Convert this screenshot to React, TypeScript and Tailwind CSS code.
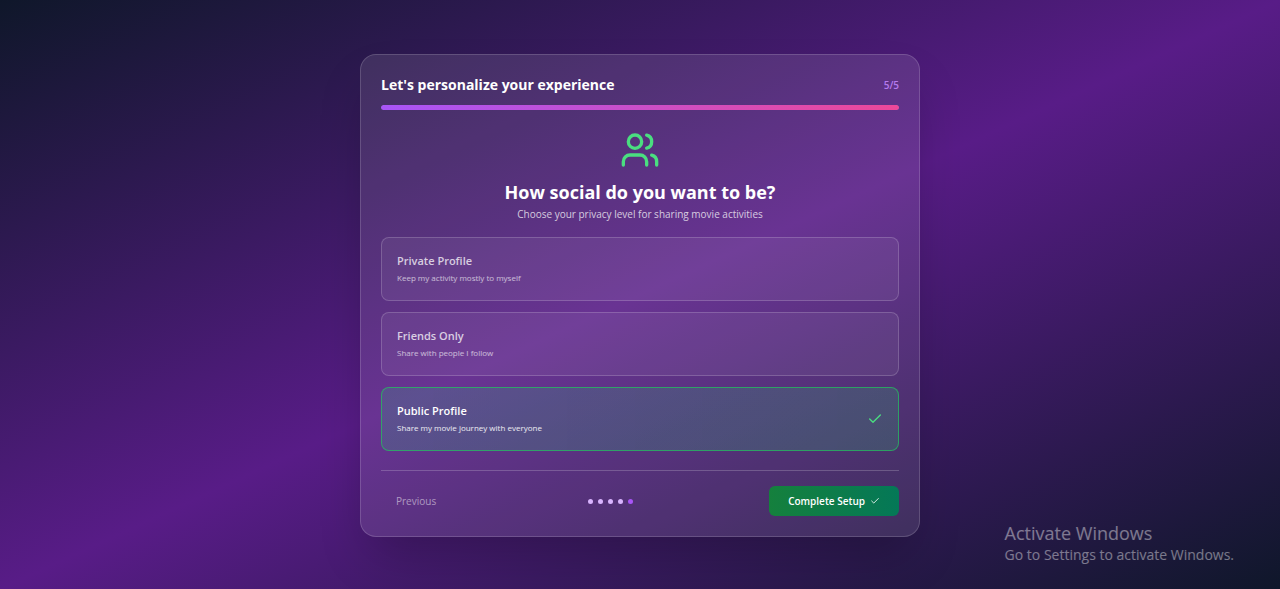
import { useState } from "react";
import { Check, Users } from "lucide-react";

const options = [
  { id: "private", title: "Private Profile", text: "Keep my activity mostly to myself" },
  { id: "friends", title: "Friends Only", text: "Share with people I follow" },
  { id: "public", title: "Public Profile", text: "Share my movie journey with everyone" },
];

const steps = [1, 2, 3, 4, 5];
const current = 5;

export default function App() {
  const [privacy, setPrivacy] = useState("public");

  return (
    <div className="relative flex min-h-screen items-center justify-center overflow-hidden bg-linear-to-br/srgb from-[#0f172a] via-[#581c87] to-[#0f172a] pt-0.5 font-['Open_Sans','Noto_Sans',sans-serif] text-white">
      <main className="w-full max-w-[560px] rounded-2xl border border-white/16 bg-white/10 p-5 shadow-2xl">
        <header>
          <div className="flex items-center justify-between">
            <h1 className="text-sm leading-5 font-bold">Let's personalize your experience</h1>
            <span className="text-[10px] leading-5 font-semibold text-[#b57bee]">
              {current}/{steps.length}
            </span>
          </div>
          <div className="mt-2.5 h-[5px] overflow-hidden rounded-full bg-white/20">
            <div
              className="h-full rounded-full bg-linear-to-r/srgb from-[#a855f7] to-[#ec4899]"
              style={{ width: `${(current / steps.length) * 100}%` }}
            />
          </div>
        </header>

        <section className="mt-5">
          <div className="text-center">
            <Users className="mx-auto size-10 text-[#4ade80]" aria-hidden="true" />
            <h2 className="mt-2.5 text-lg leading-6 font-bold">How social do you want to be?</h2>
            <p className="text-[10px] leading-5 text-white/75">
              Choose your privacy level for sharing movie activities
            </p>
          </div>

          <div className="mt-[13px] flex flex-col gap-[11px]">
            {options.map((option) => {
              const selected = option.id === privacy;
              return (
                <button
                  key={option.id}
                  type="button"
                  aria-pressed={selected}
                  onClick={() => setPrivacy(option.id)}
                  className={
                    selected
                      ? "flex h-16 items-center justify-between rounded-lg border border-[#22c55e]/70 bg-linear-to-r/srgb from-[#3aa88a]/25 to-[#3a9a74]/28 px-[15px] text-left text-white"
                      : "flex h-16 items-center justify-between rounded-lg border border-white/18 bg-white/6 px-[15px] text-left text-white/75"
                  }
                >
                  <span>
                    <span className="block text-[11px] leading-[18px] font-semibold">{option.title}</span>
                    <span
                      className={
                        selected
                          ? "block text-[8px] leading-4 text-white/90"
                          : "block text-[8px] leading-4 text-white/65"
                      }
                    >
                      {option.text}
                    </span>
                  </span>
                  {selected && <Check className="size-4 text-[#4ade80]" aria-hidden="true" />}
                </button>
              );
            })}
          </div>
        </section>

        <footer className="mt-[19px] flex items-center justify-between border-t border-white/20 pt-[15px]">
          <button type="button" className="px-[15px] text-[10px] leading-5 text-white/50">
            Previous
          </button>
          <div className="flex gap-[5px]">
            {steps.map((step) => (
              <span
                key={step}
                className={
                  step === current
                    ? "size-[5px] rounded-full bg-[#a855f7]"
                    : "size-[5px] rounded-full bg-[#d8b4fe]"
                }
              />
            ))}
          </div>
          <button
            type="button"
            className="flex h-[30px] items-center gap-[5px] rounded-md bg-linear-to-r/srgb from-[#15803d] to-[#047857] px-[19px] text-[10px] font-semibold"
          >
            Complete Setup
            <Check className="size-2.5" aria-hidden="true" />
          </button>
        </footer>
      </main>

      <aside className="absolute right-[46px] bottom-6 text-white/42">
        <p className="text-lg leading-6">Activate Windows</p>
        <p className="text-sm leading-5">Go to Settings to activate Windows.</p>
      </aside>
    </div>
  );
}
